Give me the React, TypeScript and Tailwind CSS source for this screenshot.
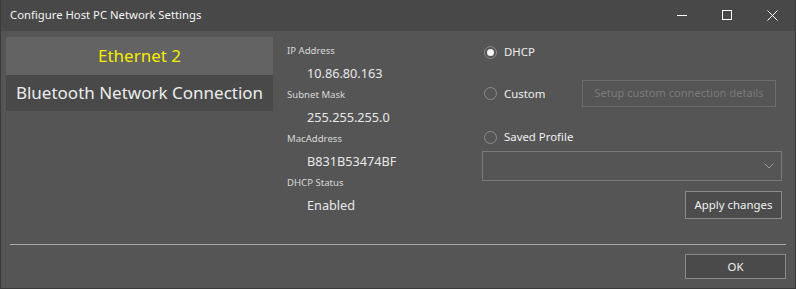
import React, { useState } from 'react';

const font = { fontFamily: '"Noto Sans", "Open Sans", sans-serif' };

function Radio({ checked, label, onClick }: { checked: boolean; label: string; onClick: () => void }) {
  return (
    <button onClick={onClick} className="flex items-center gap-[7px] h-[20px] text-[11.4px] text-[#f0f0f0]">
      <span className="w-[13px] h-[13px] rounded-full border border-[#8c8c8c] flex items-center justify-center">
        {checked && <span className="w-[7px] h-[7px] rounded-full bg-[#f4f4f4]" />}
      </span>
      {label}
    </button>
  );
}

function Info({ label, value }: { label: string; value: string }) {
  return (
    <div className="flex flex-col">
      <div className="text-[9.6px] leading-[14px] text-[#d8d8d8]">{label}</div>
      <div className="pl-[20px] pt-[8px] pb-[8px] text-[12.7px] leading-[14px] text-[#e8e8e8]">{value}</div>
    </div>
  );
}

export default function App() {
  const [adapter, setAdapter] = useState(0);
  const [mode, setMode] = useState('dhcp');
  const adapters = ['Ethernet 2', 'Bluetooth Network Connection'];

  return (
    <div style={font} className="w-[796px] h-[289px] bg-[#555555] border-x border-b border-[#3a3a3a] flex flex-col">
      <div className="h-[31px] bg-[#484848] flex items-center pl-[9px]">
        <span className="text-[11.3px] text-[#f4f4f4] flex-1">Configure Host PC Network Settings</span>
        <div className="flex items-center h-full">
          <span className="w-[45px] h-full flex items-center justify-center">
            <svg width="11" height="11" viewBox="0 0 11 11"><path d="M0 5.5h10" stroke="#fff" strokeWidth="1" /></svg>
          </span>
          <span className="w-[45px] h-full flex items-center justify-center">
            <svg width="11" height="11" viewBox="0 0 11 11"><rect x="0.5" y="0.5" width="9" height="9" fill="none" stroke="#fff" /></svg>
          </span>
          <span className="w-[45px] h-full flex items-center justify-center">
            <svg width="11" height="11" viewBox="0 0 11 11"><path d="M0.5 0.5l10 10M10.5 0.5l-10 10" stroke="#fff" strokeWidth="1" /></svg>
          </span>
        </div>
      </div>

      <div className="flex pt-[6px] h-[213px]">
        <div className="ml-[5px] w-[267px] flex flex-col self-start">
          {adapters.map((a, i) => (
            <button
              key={a}
              onClick={() => setAdapter(i)}
              className={
                i === adapter
                  ? 'h-[38px] bg-[#636363] text-[#f5ec00] text-[17px] flex items-center justify-center'
                  : 'h-[36px] bg-[#494949] text-[#ececec] text-[17px] flex items-center justify-center'
              }
            >
              {a}
            </button>
          ))}
        </div>

        <div className="ml-[14px] w-[195px] pt-[7px] flex flex-col">
          <Info label="IP Address" value="10.86.80.163" />
          <Info label="Subnet Mask" value="255.255.255.0" />
          <Info label="MacAddress" value="B831B53474BF" />
          <Info label="DHCP Status" value="Enabled" />
        </div>

        <div className="w-[300px] flex flex-col">
          <div className="pl-[2px] pt-[5px]">
            <Radio checked={mode === 'dhcp'} label="DHCP" onClick={() => setMode('dhcp')} />
          </div>
          <div className="flex items-center justify-between mt-[18px] pl-[2px]">
            <Radio checked={mode === 'custom'} label="Custom" onClick={() => setMode('custom')} />
            <button className="w-[194px] h-[27px] mr-[6px] border border-[#6c6c6c] text-[11.1px] text-[#7a7a7a]">
              Setup custom connection details
            </button>
          </div>
          <div className="pl-[2px] mt-[20px]">
            <Radio checked={mode === 'profile'} label="Saved Profile" onClick={() => setMode('profile')} />
          </div>
          <div className="mt-[4px] h-[30px] border border-[#7a7a7a] flex items-center justify-end pr-[7px]">
            <svg width="10" height="6" viewBox="0 0 10 6"><path d="M0.5 0.5l4.5 4.5l4.5-4.5" fill="none" stroke="#9a9a9a" /></svg>
          </div>
          <div className="flex justify-end mt-[10px]">
            <button className="w-[97px] h-[28px] bg-[#4c4c4c] border border-[#8a8a8a] text-[11.4px] text-[#f0f0f0]">
              Apply changes
            </button>
          </div>
        </div>
      </div>

      <div className="mx-[9px] h-[1px] bg-[#a8a8a8]" />
      <div className="flex justify-end pt-[9px] pr-[9px]">
        <button className="w-[101px] h-[25px] bg-[#4a4a4a] border border-[#8a8a8a] text-[11.4px] text-[#f0f0f0]">OK</button>
      </div>
    </div>
  );
}
